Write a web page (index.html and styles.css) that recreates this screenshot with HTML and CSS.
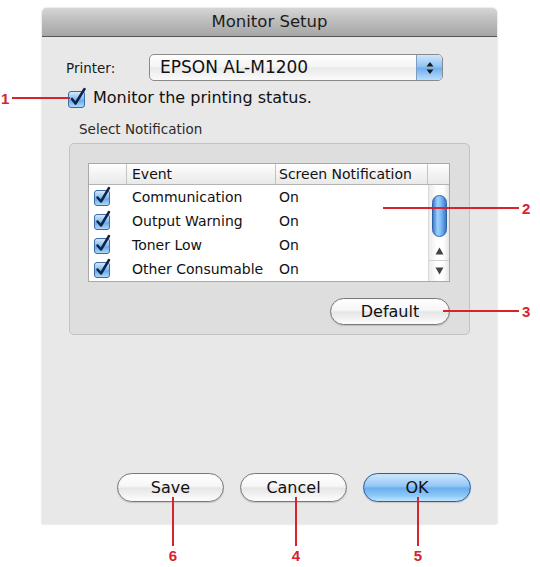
FILE: index.html
```html
<!DOCTYPE html>
<html>
<head>
<meta charset="utf-8">
<link rel="stylesheet" href="styles.css">
</head>
<body>
<div class="stage">
  <div class="window">
    <div class="titlebar">Monitor Setup</div>
    <div class="content">
      <div class="printer-row">
        <span class="label">Printer:</span>
        <div class="popup">
          <span class="popup-text">EPSON AL-M1200</span>
          <span class="stepper">
            <svg width="10" height="16" viewBox="0 0 10 16"><path d="M5 2 L8.5 6.5 L1.5 6.5 Z" fill="#1a1a1a"/><path d="M5 14 L8.5 9.5 L1.5 9.5 Z" fill="#1a1a1a"/></svg>
          </span>
        </div>
      </div>
      <div class="monitor-row">
        <svg class="chk-main" width="21" height="21" viewBox="0 0 21 21">
          <defs><linearGradient id="cb0" x1="0" y1="0" x2="0" y2="1"><stop offset="0" stop-color="#d9eefe"/><stop offset=".5" stop-color="#7fb8f0"/><stop offset=".55" stop-color="#6aa8ea"/><stop offset="1" stop-color="#b2dcfc"/></linearGradient></defs>
          <rect x="1.5" y="4.5" width="16" height="16" rx="2.5" fill="url(#cb0)" stroke="#3c6ca6"/>
          <path d="M5 12 L8.5 16.5 L17.5 2" fill="none" stroke="#10234a" stroke-width="2.6" stroke-linecap="round" stroke-linejoin="round"/>
        </svg>
        <span class="monitor-text">Monitor the printing status.</span>
      </div>
      <div class="group-title">Select Notification</div>
      <div class="group">
        <div class="table">
          <div class="thead">
            <div class="th c-chk"></div>
            <div class="th c-ev">Event</div>
            <div class="th c-sn">Screen Notification</div>
            <div class="th c-sb"></div>
          </div>
          <div class="tbody">
            <div class="rows">
              <div class="row">
                <div class="td c-chk"><svg width="19" height="20" viewBox="0 0 19 20"><defs><linearGradient id="cb1" x1="0" y1="0" x2="0" y2="1"><stop offset="0" stop-color="#d9eefe"/><stop offset=".5" stop-color="#7fb8f0"/><stop offset=".55" stop-color="#6aa8ea"/><stop offset="1" stop-color="#b2dcfc"/></linearGradient></defs><rect x="1.5" y="4.5" width="15" height="15" rx="2.5" fill="url(#cb1)" stroke="#3c6ca6"/><path d="M4.5 11.5 L8 15.5 L16 2" fill="none" stroke="#10234a" stroke-width="2.5" stroke-linecap="round" stroke-linejoin="round"/></svg></div>
                <div class="td c-ev">Communication</div>
                <div class="td c-sn">On</div>
              </div>
              <div class="row">
                <div class="td c-chk"><svg width="19" height="20" viewBox="0 0 19 20"><defs><linearGradient id="cb2" x1="0" y1="0" x2="0" y2="1"><stop offset="0" stop-color="#d9eefe"/><stop offset=".5" stop-color="#7fb8f0"/><stop offset=".55" stop-color="#6aa8ea"/><stop offset="1" stop-color="#b2dcfc"/></linearGradient></defs><rect x="1.5" y="4.5" width="15" height="15" rx="2.5" fill="url(#cb2)" stroke="#3c6ca6"/><path d="M4.5 11.5 L8 15.5 L16 2" fill="none" stroke="#10234a" stroke-width="2.5" stroke-linecap="round" stroke-linejoin="round"/></svg></div>
                <div class="td c-ev">Output Warning</div>
                <div class="td c-sn">On</div>
              </div>
              <div class="row">
                <div class="td c-chk"><svg width="19" height="20" viewBox="0 0 19 20"><defs><linearGradient id="cb3" x1="0" y1="0" x2="0" y2="1"><stop offset="0" stop-color="#d9eefe"/><stop offset=".5" stop-color="#7fb8f0"/><stop offset=".55" stop-color="#6aa8ea"/><stop offset="1" stop-color="#b2dcfc"/></linearGradient></defs><rect x="1.5" y="4.5" width="15" height="15" rx="2.5" fill="url(#cb3)" stroke="#3c6ca6"/><path d="M4.5 11.5 L8 15.5 L16 2" fill="none" stroke="#10234a" stroke-width="2.5" stroke-linecap="round" stroke-linejoin="round"/></svg></div>
                <div class="td c-ev">Toner Low</div>
                <div class="td c-sn">On</div>
              </div>
              <div class="row">
                <div class="td c-chk"><svg width="19" height="20" viewBox="0 0 19 20"><defs><linearGradient id="cb4" x1="0" y1="0" x2="0" y2="1"><stop offset="0" stop-color="#d9eefe"/><stop offset=".5" stop-color="#7fb8f0"/><stop offset=".55" stop-color="#6aa8ea"/><stop offset="1" stop-color="#b2dcfc"/></linearGradient></defs><rect x="1.5" y="4.5" width="15" height="15" rx="2.5" fill="url(#cb4)" stroke="#3c6ca6"/><path d="M4.5 11.5 L8 15.5 L16 2" fill="none" stroke="#10234a" stroke-width="2.5" stroke-linecap="round" stroke-linejoin="round"/></svg></div>
                <div class="td c-ev">Other Consumable</div>
                <div class="td c-sn">On</div>
              </div>
            </div>
            <div class="scrollbar">
              <div class="track"><div class="thumb"></div></div>
              <div class="arrow arrow-up"><svg width="9" height="8" viewBox="0 0 9 8"><path d="M4.5 0.5 L8.5 7.5 L0.5 7.5 Z" fill="#444"/></svg></div>
              <div class="arrow arrow-down"><svg width="9" height="8" viewBox="0 0 9 8"><path d="M4.5 7.5 L8.5 0.5 L0.5 0.5 Z" fill="#444"/></svg></div>
            </div>
          </div>
        </div>
        <div class="default-row">
          <button class="btn btn-default">Default</button>
        </div>
      </div>
      <div class="buttons">
        <button class="btn btn-save">Save</button>
        <button class="btn btn-cancel">Cancel</button>
        <button class="btn btn-ok">OK</button>
      </div>
    </div>
  </div>

  <div class="callout callout-1"><span class="num">1</span><span class="hline"></span></div>
  <div class="callout callout-2"><span class="hline"></span><span class="num">2</span></div>
  <div class="callout callout-3"><span class="hline"></span><span class="num">3</span></div>
  <div class="callout vcallout callout-6"><span class="vline"></span><span class="num">6</span></div>
  <div class="callout vcallout callout-4"><span class="vline"></span><span class="num">4</span></div>
  <div class="callout vcallout callout-5"><span class="vline"></span><span class="num">5</span></div>
</div>
</body>
</html>
```

FILE: styles.css
```css
* { box-sizing: border-box; }

html, body {
  margin: 0;
  padding: 0;
  background: #ffffff;
}

body {
  font-family: "DejaVu Sans", "Liberation Sans", sans-serif;
  color: #111;
}

.stage {
  position: relative;
  width: 540px;
  height: 567px;
  overflow: hidden;
}

.window {
  margin: 8px 0 0 42px;
  width: 455px;
  height: 516px;
  background: #e8e8e8;
  border-radius: 5px 5px 0 0;
  box-shadow: 0 0 2px rgba(0, 0, 0, 0.25);
  display: flex;
  flex-direction: column;
}

.titlebar {
  height: 29px;
  flex: none;
  border-radius: 5px 5px 0 0;
  border-bottom: 1px solid #545454;
  background: linear-gradient(#d6d6d6, #bdbdbd 45%, #a6a6a6);
  font-size: 16.5px;
  line-height: 28px;
  text-align: center;
  color: #1c1c1c;
}

.content {
  flex: 1;
  display: flex;
  flex-direction: column;
  padding: 17px 26px 22px 24px;
}

.printer-row {
  display: flex;
  align-items: center;
  height: 27px;
}

.label {
  width: 83px;
  font-size: 13.5px;
  color: #1a1a1a;
}

.popup {
  width: 294px;
  height: 27px;
  display: flex;
  border: 1px solid #8a8a8a;
  border-radius: 5px;
  background: linear-gradient(#ffffff, #f4f4f4 48%, #e9e9e9 52%, #fbfbfb);
  overflow: hidden;
}

.popup-text {
  flex: 1;
  padding-left: 10px;
  font-size: 17px;
  line-height: 25px;
  color: #111;
}

.stepper {
  width: 26px;
  display: flex;
  align-items: center;
  justify-content: center;
  border-left: 1px solid #7f9cc4;
  background: linear-gradient(#cfe6fc, #8cc2f3 48%, #6eadee 52%, #b8defd);
}

.monitor-row {
  display: flex;
  align-items: center;
  height: 21px;
  margin-top: 6px;
}

.chk-main {
  flex: none;
  margin-left: 1px;
}

.monitor-text {
  margin-left: 5px;
  font-size: 16px;
  color: #111;
}

.group-title {
  margin: 13px 0 0 13px;
  font-size: 13.5px;
  line-height: 16px;
  color: #2a2a2a;
}

.group {
  margin: 6px 0 0 3px;
  width: 401px;
  height: 192px;
  border: 1px solid #c2c2c2;
  border-radius: 5px;
  background: #dedede;
  padding: 19px 19px 0 18px;
}

.table {
  width: 362px;
  height: 119px;
  border: 1px solid #a9a9a9;
  background: #fff;
  display: flex;
  flex-direction: column;
}

.thead {
  display: flex;
  height: 21px;
  flex: none;
  border-bottom: 1px solid #b4b4b4;
  background: linear-gradient(#ffffff, #f3f3f3 50%, #e9e9e9);
}

.th {
  font-size: 14px;
  line-height: 20px;
  border-right: 1px solid #c4c4c4;
  color: #111;
  white-space: nowrap;
}

.th:last-child { border-right: none; }

.c-chk { width: 38px; flex: none; }
.c-ev { width: 149px; flex: none; padding-left: 5px; }
.c-sn { width: 152px; flex: none; padding-left: 3px; }
.c-sb { flex: 1; }

.tbody {
  flex: 1;
  display: flex;
  overflow: hidden;
}

.rows {
  width: 339px;
  display: flex;
  flex-direction: column;
}

.row {
  display: flex;
  height: 24.25px;
  align-items: center;
}

.td {
  font-size: 14px;
  white-space: nowrap;
  color: #111;
}

.td.c-chk {
  display: flex;
  align-items: center;
  padding-left: 4px;
  padding-bottom: 2px;
}

.scrollbar {
  flex: 1;
  display: flex;
  flex-direction: column;
  border-left: 1px solid #d8d8d8;
  background: linear-gradient(to right, #ececec, #ffffff 40%, #ffffff 70%, #e6e6e6);
}

.track {
  height: 56px;
  padding: 10px 0 0 3px;
}

.thumb {
  width: 15px;
  height: 42px;
  border-radius: 8px;
  border: 1px solid #2f63a6;
  background: linear-gradient(to right, #3c7bd0, #9fd0fb 35%, #7cbcf6 60%, #3a78cb);
}

.arrow {
  height: 20px;
  display: flex;
  align-items: center;
  justify-content: center;
}

.arrow-up { border-bottom: 1px solid #cfcfcf; }

.default-row {
  display: flex;
  justify-content: flex-end;
  margin-top: 16px;
}

.btn {
  font-family: "DejaVu Sans", "Liberation Sans", sans-serif;
  font-size: 16px;
  color: #111;
  border: 1px solid #7a7a7a;
  border-radius: 15px;
  background: linear-gradient(#ffffff, #f6f6f6 45%, #e6e6e6 52%, #f3f3f3 80%, #ffffff);
  box-shadow: inset 0 0 1px rgba(0, 0, 0, 0.2), 0 1px 1px rgba(0, 0, 0, 0.15);
  padding: 0;
  line-height: 25px;
  text-align: center;
}

.btn-default {
  width: 120px;
  height: 27px;
}

.buttons {
  margin-top: auto;
  display: flex;
  justify-content: flex-end;
  gap: 16px;
}

.btn-save, .btn-cancel {
  width: 107px;
  height: 29px;
  line-height: 27px;
}

.btn-ok {
  width: 108px;
  height: 29px;
  line-height: 27px;
  border-color: #2f5f9e;
  background: linear-gradient(#cfe7fd, #93c7f5 45%, #6aaef0 52%, #8cc8f8 80%, #c4e6fe);
}

/* annotation callouts */
.callout {
  position: absolute;
  display: flex;
  align-items: center;
  color: #d8222c;
  font-family: "Liberation Sans", sans-serif;
  font-weight: bold;
  font-size: 15px;
}

.hline {
  height: 2px;
  background: #d8222c;
}

.vline {
  width: 2px;
  background: #d8222c;
}

.callout-1 { left: 1px; top: 89px; height: 18px; }
.callout-1 .hline { width: 58px; margin-left: 3px; }

.callout-2 { left: 383px; top: 199px; height: 18px; }
.callout-2 .hline { width: 136px; margin-right: 3px; }

.callout-3 { left: 443px; top: 302px; height: 18px; }
.callout-3 .hline { width: 76px; margin-right: 3px; }

.vcallout {
  flex-direction: column;
  width: 16px;
  top: 497px;
}

.vcallout .vline { height: 49px; }
.vcallout .num { line-height: 16px; margin-top: 2px; }

.callout-6 { left: 165px; }
.callout-4 { left: 288px; }
.callout-5 { left: 410px; }
```
